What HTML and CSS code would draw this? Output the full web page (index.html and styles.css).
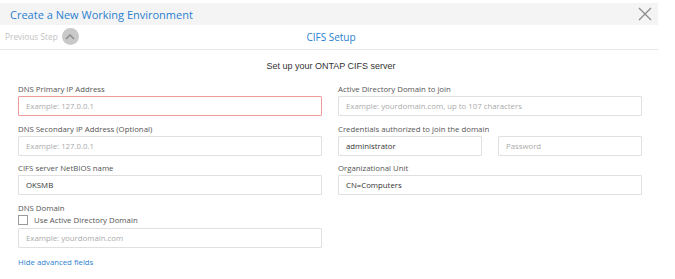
FILE: index.html
```html
<!DOCTYPE html>
<html lang="en">
<head>
    <meta charset="UTF-8">
    <title>Create a New Working Environment</title>
    <link rel="stylesheet" href="styles.css">
</head>
<body>
    <div class="wizard">
        <div class="header">
            <div class="title">Create a New Working Environment</div>
            <svg class="close" width="14" height="14" viewBox="0 0 14 14">
                <path d="M1 1 L13 13 M13 1 L1 13" stroke="#8a8a8a" stroke-width="1.3" fill="none"/>
            </svg>
        </div>

        <div class="steps">
            <div class="prev-step">
                Previous Step
                <span class="prev-btn">
                    <svg width="10" height="6" viewBox="0 0 10 6">
                        <path d="M1 5 L5 1 L9 5" stroke="#8a8a8a" stroke-width="1.4" fill="none"/>
                    </svg>
                </span>
            </div>
            <div class="step-name">CIFS Setup</div>
        </div>

        <div class="subtitle">Set up your ONTAP CIFS server</div>

        <div class="form">
            <div class="field">
                <label>DNS Primary IP Address</label>
                <input class="input error" placeholder="Example: 127.0.0.1">
            </div>
            <div class="field">
                <label>Active Directory Domain to join</label>
                <input class="input" placeholder="Example: yourdomain.com, up to 107 characters">
            </div>

            <div class="field">
                <label>DNS Secondary IP Address (Optional)</label>
                <input class="input" placeholder="Example: 127.0.0.1">
            </div>
            <div class="field">
                <label>Credentials authorized to join the domain</label>
                <div class="pair">
                    <input class="input" value="administrator">
                    <input class="input" placeholder="Password">
                </div>
            </div>

            <div class="field">
                <label>CIFS server NetBIOS name</label>
                <input class="input" value="OKSMB">
            </div>
            <div class="field">
                <label>Organizational Unit</label>
                <input class="input" value="CN=Computers">
            </div>

            <div class="field">
                <label>DNS Domain</label>
                <div class="check-row">
                    <span class="checkbox"></span>
                    Use Active Directory Domain
                </div>
                <input class="input" placeholder="Example: yourdomain.com">
            </div>
        </div>

        <a class="advanced" href="#">Hide advanced fields</a>
    </div>
</body>
</html>
```

FILE: styles.css
```css
body {
    margin: 0;
    padding: 0;
    background-color: #ffffff;
    font-family: "Open Sans", "Liberation Sans", sans-serif;
    color: #444;
}

.wizard {
    width: 658px;
    padding-top: 3px;
}

.header {
    height: 22px;
    background-color: #f4f4f4;
    display: flex;
    justify-content: space-between;
    align-items: center;
    padding: 0 6px 0 10px;
}

.title {
    font-size: 11px;
    color: #2a7fd0;
}

.steps {
    height: 24px;
    border-bottom: 1px solid #e6e6e6;
    position: relative;
    display: flex;
    align-items: center;
    justify-content: center;
}

.prev-step {
    position: absolute;
    left: 5px;
    top: 3px;
    display: flex;
    align-items: center;
    gap: 4px;
    font-size: 8.3px;
    color: #c2c2c2;
}

.prev-btn {
    width: 17px;
    height: 17px;
    border-radius: 50%;
    background-color: #c9c9c9;
    display: flex;
    align-items: center;
    justify-content: center;
}

.step-name {
    font-size: 10px;
    color: #2a7fd0;
    margin-left: 4px;
}

.subtitle {
    text-align: center;
    font-family: "Liberation Sans", Arial, sans-serif;
    font-size: 9px;
    color: #333;
    margin-top: 11px;
    margin-left: 4px;
}

.form {
    display: grid;
    grid-template-columns: 304px 304px;
    column-gap: 16px;
    padding-left: 18px;
    margin-top: 12px;
}

.field {
    display: flex;
    flex-direction: column;
    margin-bottom: 6.5px;
}

.field label {
    font-size: 7.8px;
    line-height: 12px;
    color: #555;
    margin-bottom: 1px;
}

.input {
    box-sizing: border-box;
    width: 100%;
    height: 20px;
    border: 1px solid #e0e0e0;
    border-radius: 1px;
    padding: 0 7px;
    font-family: "Open Sans", "Liberation Sans", sans-serif;
    font-size: 7.8px;
    color: #333;
    outline: none;
}

.input::placeholder {
    color: #aaa;
}

.input.error {
    border-color: #f09a9a;
}

.pair {
    display: flex;
    gap: 16px;
}

.pair .input {
    width: 144px;
}

.check-row {
    display: flex;
    align-items: center;
    gap: 6px;
    font-size: 7.8px;
    color: #555;
    height: 10px;
    margin: 0 0 3px;
}

.checkbox {
    box-sizing: border-box;
    width: 10px;
    height: 10px;
    border: 1px solid #999;
    background-color: #fff;
}

.advanced {
    display: block;
    margin: 3px 0 0 18px;
    font-size: 7.8px;
    color: #2a7fd0;
    text-decoration: none;
}
```
